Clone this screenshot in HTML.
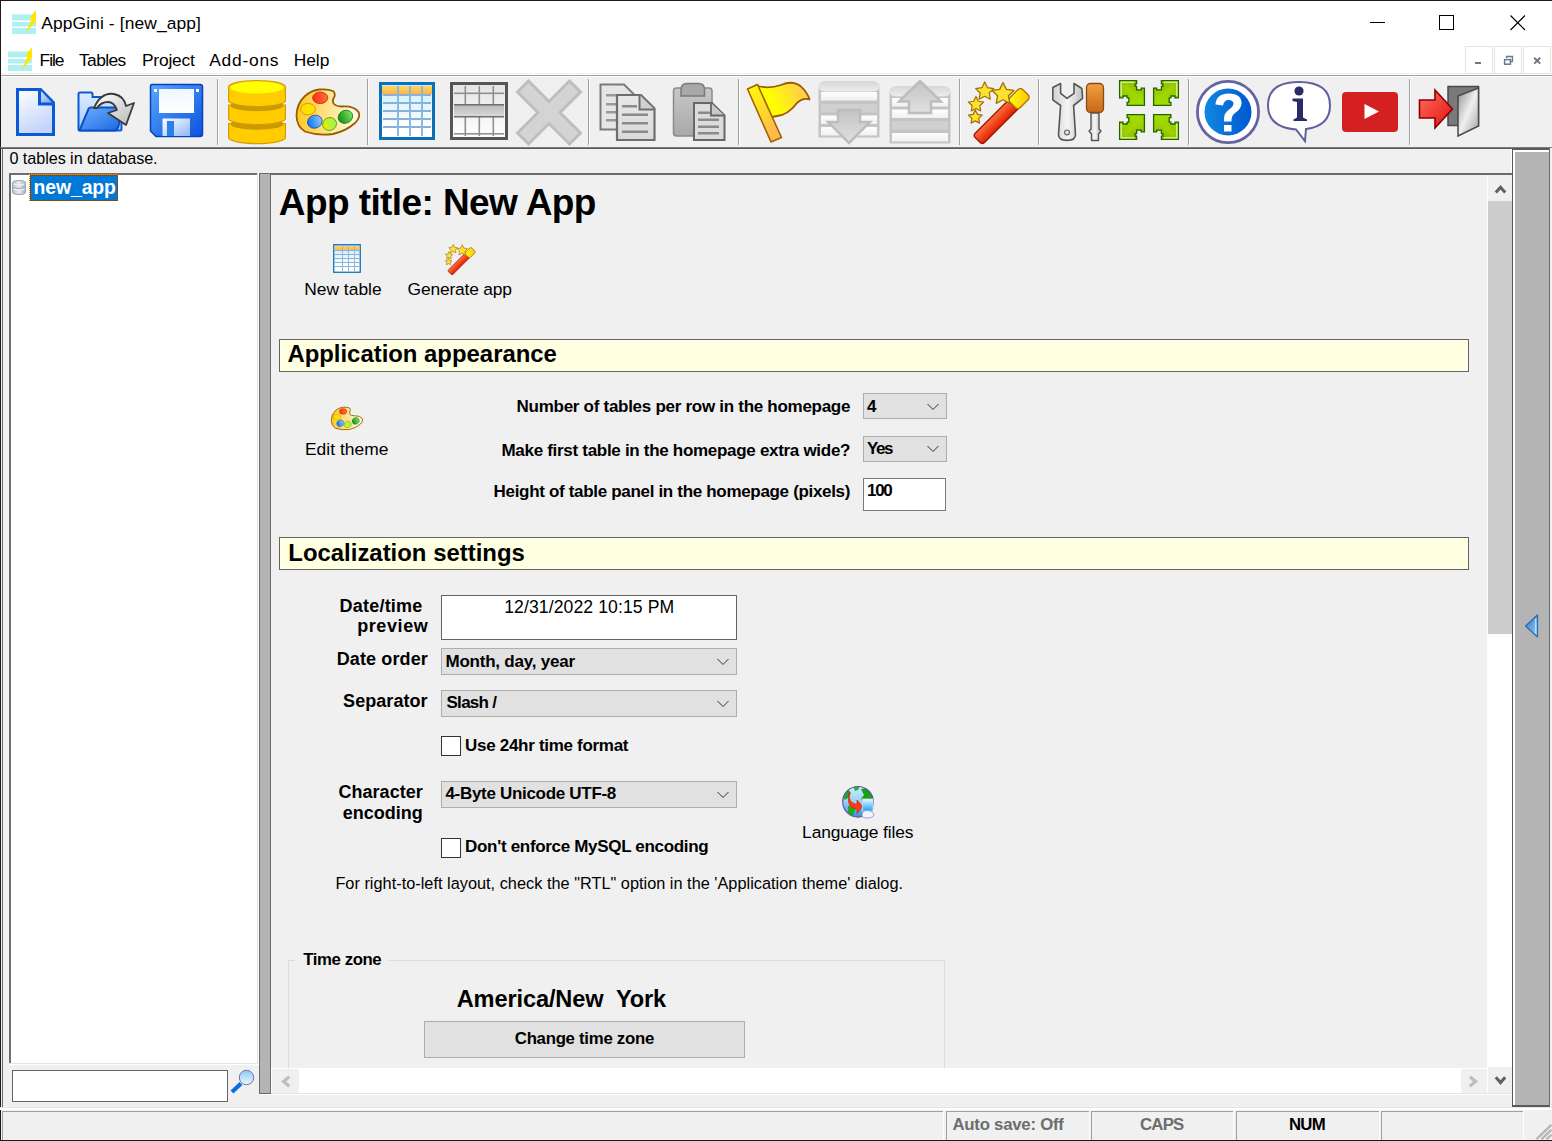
<!DOCTYPE html><html><head><meta charset="utf-8"><style>html,body{margin:0;padding:0;overflow:hidden;background:#f0f0f0}#w{position:relative;width:1552px;height:1141px;overflow:hidden;font-family:"Liberation Sans",sans-serif}#w div,#w svg{position:absolute}#w .t{white-space:pre}</style></head><body><div id="w"><div style="left:0px;top:0px;width:1552px;height:1141px;background:#f0f0f0;"></div><div style="left:0px;top:0px;width:1552px;height:75px;background:#ffffff;"></div><div style="left:0px;top:73px;width:1552px;height:1px;background:#f0f0f0;"></div><div style="left:0px;top:75px;width:1552px;height:1px;background:#a0a0a0;"></div><div style="left:0px;top:76px;width:1552px;height:1px;background:#ffffff;"></div><div style="left:0px;top:0px;width:1552px;height:1px;background:#1a1a1a;"></div><div style="left:0px;top:0px;width:1px;height:1141px;background:#1a1a1a;"></div><div style="left:0px;top:1140px;width:1552px;height:1px;background:#1a1a1a;"></div><div class="t" style="left:41.20px;top:15.27px;font-size:17.4px;line-height:17.4px;font-weight:400;color:#000;letter-spacing:0.119px;">AppGini - [new_app]</div><div style="left:1370px;top:22px;width:15px;height:1px;background:#000;"></div><div style="left:1439px;top:15px;width:13px;height:13px;background:none;border:1px solid #000;"></div><svg style="left:1510px;top:15px" width="16" height="16"><path d="M0.5 0.5 L15 15 M15 0.5 L0.5 15" stroke="#000" stroke-width="1.1"/></svg><div class="t" style="left:39.60px;top:51.87px;font-size:17.4px;line-height:17.4px;font-weight:400;color:#000;letter-spacing:-1.077px;">File</div><div class="t" style="left:79.00px;top:51.87px;font-size:17.4px;line-height:17.4px;font-weight:400;color:#000;letter-spacing:-0.601px;">Tables</div><div class="t" style="left:142.00px;top:51.87px;font-size:17.4px;line-height:17.4px;font-weight:400;color:#000;letter-spacing:-0.225px;">Project</div><div class="t" style="left:209.20px;top:51.87px;font-size:17.4px;line-height:17.4px;font-weight:400;color:#000;letter-spacing:0.764px;">Add-ons</div><div class="t" style="left:293.70px;top:51.87px;font-size:17.4px;line-height:17.4px;font-weight:400;color:#000;letter-spacing:-0.031px;">Help</div><div style="left:1465px;top:46px;width:26px;height:26px;background:#ffffff;border:1px solid #e3e3e3;"></div><div style="left:1494px;top:46px;width:26px;height:26px;background:#ffffff;border:1px solid #e3e3e3;"></div><div style="left:1523px;top:46px;width:26px;height:26px;background:#ffffff;border:1px solid #e3e3e3;"></div><svg style="left:1465px;top:46px" width="90" height="28"><rect x="10" y="16" width="6" height="2" fill="#6a7a8a"/><g transform="translate(29,0)"><rect x="10.6" y="13.6" width="5.8" height="4.6" fill="none" stroke="#6a7a8a" stroke-width="1.5"/><path d="M12.6,12 V10.6 H18.4 V15.4 H17" fill="none" stroke="#6a7a8a" stroke-width="1.5"/></g><g transform="translate(58,0)"><path d="M11.2,11.8 L17.2,17.6 M17.2,11.8 L11.2,17.6" stroke="#6a7a8a" stroke-width="2"/></g></svg><div style="left:1px;top:77px;width:1551px;height:70px;background:#f0f0f0;"></div><div style="left:217px;top:79px;width:1px;height:66px;background:#a0a0a0;"></div><div style="left:218px;top:79px;width:1px;height:66px;background:#ffffff;"></div><div style="left:367px;top:79px;width:1px;height:66px;background:#a0a0a0;"></div><div style="left:368px;top:79px;width:1px;height:66px;background:#ffffff;"></div><div style="left:588px;top:79px;width:1px;height:66px;background:#a0a0a0;"></div><div style="left:589px;top:79px;width:1px;height:66px;background:#ffffff;"></div><div style="left:738px;top:79px;width:1px;height:66px;background:#a0a0a0;"></div><div style="left:739px;top:79px;width:1px;height:66px;background:#ffffff;"></div><div style="left:959px;top:79px;width:1px;height:66px;background:#a0a0a0;"></div><div style="left:960px;top:79px;width:1px;height:66px;background:#ffffff;"></div><div style="left:1038px;top:79px;width:1px;height:66px;background:#a0a0a0;"></div><div style="left:1039px;top:79px;width:1px;height:66px;background:#ffffff;"></div><div style="left:1188px;top:79px;width:1px;height:66px;background:#a0a0a0;"></div><div style="left:1189px;top:79px;width:1px;height:66px;background:#ffffff;"></div><div style="left:1409px;top:79px;width:1px;height:66px;background:#a0a0a0;"></div><div style="left:1410px;top:79px;width:1px;height:66px;background:#ffffff;"></div><div style="left:0px;top:147px;width:1552px;height:1px;background:#7a7a7a;"></div><div style="left:1px;top:148px;width:1511px;height:1px;background:#5a5a5a;"></div><div style="left:2px;top:148px;width:1px;height:960px;background:#6a6a6a;"></div><div style="left:1511px;top:149px;width:1px;height:24px;background:#ffffff;"></div><div class="t" style="left:9.50px;top:150.09px;font-size:16.2px;line-height:16.2px;font-weight:400;color:#000;letter-spacing:-0.065px;">0 tables in database.</div><div style="left:9px;top:173px;width:249px;height:891px;background:#ffffff;"></div><div style="left:9px;top:173px;width:249px;height:2px;background:#6e6e6e;"></div><div style="left:9px;top:173px;width:2px;height:891px;background:#6e6e6e;"></div><div style="left:257px;top:173px;width:1px;height:891px;background:#e3e3e3;"></div><div style="left:258px;top:173px;width:1px;height:891px;background:#ffffff;"></div><div style="left:9px;top:1063px;width:249px;height:1px;background:#e3e3e3;"></div><div style="left:9px;top:1064px;width:250px;height:1px;background:#ffffff;"></div><div style="left:30px;top:175px;width:87px;height:25px;background:#0078d7;outline:1px dotted #ff8c00;outline-offset:0"></div><div class="t" style="left:33.50px;top:178.18px;font-size:19.4px;line-height:19.4px;font-weight:700;color:#fff;letter-spacing:-0.085px;">new_app</div><div style="left:12px;top:1070px;width:214px;height:30px;background:#ffffff;border:1px solid #646464;"></div><div style="left:259px;top:173px;width:10px;height:919px;background:#b4b4b4;border:1px solid #6a6a6a;"></div><div style="left:271px;top:173px;width:1241px;height:2px;background:#6a6a6a;"></div><div style="left:271px;top:175px;width:1217px;height:893px;background:#f0f0f0;"></div><div style="left:1487px;top:175px;width:1px;height:918px;background:#ffffff;"></div><div style="left:1488px;top:175px;width:24px;height:918px;background:#ffffff;"></div><div style="left:1488px;top:175px;width:24px;height:26px;background:#f0f0f0;"></div><div style="left:1488px;top:201px;width:24px;height:433px;background:#cdcdcd;"></div><div style="left:1488px;top:1067px;width:24px;height:26px;background:#f0f0f0;"></div><div style="left:1512px;top:149px;width:1px;height:945px;background:#6a6a6a;"></div><div style="left:271px;top:1068px;width:1217px;height:25px;background:#ffffff;"></div><div style="left:272px;top:1069px;width:27px;height:24px;background:#f0f0f0;"></div><div style="left:1461px;top:1069px;width:26px;height:24px;background:#f0f0f0;"></div><div style="left:271px;top:1093px;width:1241px;height:1px;background:#e3e3e3;"></div><div style="left:259px;top:1094px;width:1253px;height:1px;background:#ffffff;"></div><div style="left:1512px;top:148px;width:38px;height:959px;background:#5a5a5a;"></div><div style="left:1513px;top:150px;width:36px;height:955px;background:#ffffff;"></div><div style="left:1515px;top:152px;width:34px;height:953px;background:#b4b4b4;"></div><div style="left:1549px;top:148px;width:1px;height:959px;background:#6a6a6a;"></div><div style="left:0px;top:1107px;width:1552px;height:1px;background:#e6e6e6;"></div><div style="left:0px;top:1108px;width:1552px;height:2px;background:#ffffff;"></div><div style="left:2px;top:1111px;width:941px;height:1px;background:#a0a0a0;"></div><div style="left:2px;top:1111px;width:1px;height:29px;background:#a0a0a0;"></div><div style="left:943px;top:1111px;width:1px;height:29px;background:#ffffff;"></div><div style="left:946px;top:1111px;width:143px;height:1px;background:#a0a0a0;"></div><div style="left:946px;top:1111px;width:1px;height:29px;background:#a0a0a0;"></div><div style="left:1089px;top:1111px;width:1px;height:29px;background:#ffffff;"></div><div style="left:1091px;top:1111px;width:142px;height:1px;background:#a0a0a0;"></div><div style="left:1091px;top:1111px;width:1px;height:29px;background:#a0a0a0;"></div><div style="left:1233px;top:1111px;width:1px;height:29px;background:#ffffff;"></div><div style="left:1236px;top:1111px;width:143px;height:1px;background:#a0a0a0;"></div><div style="left:1236px;top:1111px;width:1px;height:29px;background:#a0a0a0;"></div><div style="left:1379px;top:1111px;width:1px;height:29px;background:#ffffff;"></div><div style="left:1381px;top:1111px;width:142px;height:1px;background:#a0a0a0;"></div><div style="left:1381px;top:1111px;width:1px;height:29px;background:#a0a0a0;"></div><div style="left:1523px;top:1111px;width:1px;height:29px;background:#ffffff;"></div><div class="t" style="left:952.50px;top:1116.78px;font-size:16.8px;line-height:16.8px;font-weight:700;color:#6d6d6d;letter-spacing:-0.257px;">Auto save: Off</div><div class="t" style="left:1140.00px;top:1116.78px;font-size:16.8px;line-height:16.8px;font-weight:700;color:#6d6d6d;letter-spacing:-0.790px;">CAPS</div><div class="t" style="left:1289.00px;top:1116.78px;font-size:16.8px;line-height:16.8px;font-weight:700;color:#000;letter-spacing:-0.777px;">NUM</div><div class="t" style="left:278.80px;top:183.68px;font-size:37px;line-height:37px;font-weight:700;color:#000;letter-spacing:-0.582px;">App title: New App</div><div class="t" style="left:304.20px;top:281.07px;font-size:17.4px;line-height:17.4px;font-weight:400;color:#000;letter-spacing:0.015px;">New table</div><div class="t" style="left:407.60px;top:281.07px;font-size:17.4px;line-height:17.4px;font-weight:400;color:#000;letter-spacing:-0.183px;">Generate app</div><div style="left:279px;top:339px;width:1188px;height:31px;background:#ffffe1;border:1px solid #646464;"></div><div class="t" style="left:287.40px;top:342.27px;font-size:23.9px;line-height:23.9px;font-weight:700;color:#000;letter-spacing:-0.001px;">Application appearance</div><div class="t" style="left:304.90px;top:441.27px;font-size:17.4px;line-height:17.4px;font-weight:400;color:#000;letter-spacing:0.048px;">Edit theme</div><div class="t" style="left:516.60px;top:397.91px;font-size:17px;line-height:17px;font-weight:700;color:#000;letter-spacing:-0.281px;">Number of tables per row in the homepage</div><div class="t" style="left:501.50px;top:441.81px;font-size:17px;line-height:17px;font-weight:700;color:#000;letter-spacing:-0.300px;">Make first table in the homepage extra wide?</div><div class="t" style="left:493.60px;top:482.61px;font-size:17px;line-height:17px;font-weight:700;color:#000;letter-spacing:-0.320px;">Height of table panel in the homepage (pixels)</div><div style="left:863px;top:393px;width:82px;height:24px;background:#e1e1e1;border:1px solid #adadad;"></div><div style="left:863px;top:436px;width:82px;height:24px;background:#e1e1e1;border:1px solid #adadad;"></div><div style="left:863px;top:478px;width:81px;height:31px;background:#ffffff;border:1px solid #7a7a7a;"></div><div class="t" style="left:867.00px;top:397.91px;font-size:17px;line-height:17px;font-weight:700;color:#000;letter-spacing:0.000px;">4</div><div class="t" style="left:867.00px;top:440.11px;font-size:17px;line-height:17px;font-weight:700;color:#000;letter-spacing:-1.454px;">Yes</div><div class="t" style="left:867.00px;top:482.01px;font-size:17px;line-height:17px;font-weight:700;color:#000;letter-spacing:-1.278px;">100</div><div style="left:279px;top:537px;width:1188px;height:31px;background:#ffffe1;border:1px solid #646464;"></div><div class="t" style="left:288.30px;top:541.07px;font-size:23.9px;line-height:23.9px;font-weight:700;color:#000;letter-spacing:0.011px;">Localization settings</div><div class="t" style="left:339.50px;top:596.56px;font-size:18px;line-height:18px;font-weight:700;color:#000;letter-spacing:0.223px;">Date/time</div><div class="t" style="left:357.20px;top:617.36px;font-size:18px;line-height:18px;font-weight:700;color:#000;letter-spacing:0.589px;">preview</div><div class="t" style="left:336.70px;top:649.56px;font-size:18px;line-height:18px;font-weight:700;color:#000;letter-spacing:0.120px;">Date order</div><div class="t" style="left:343.10px;top:691.86px;font-size:18px;line-height:18px;font-weight:700;color:#000;letter-spacing:0.059px;">Separator</div><div class="t" style="left:338.40px;top:782.56px;font-size:18px;line-height:18px;font-weight:700;color:#000;letter-spacing:0.045px;">Character</div><div class="t" style="left:342.70px;top:803.76px;font-size:18px;line-height:18px;font-weight:700;color:#000;letter-spacing:0.015px;">encoding</div><div style="left:441px;top:595px;width:294px;height:43px;background:#ffffff;border:1px solid #646464;"></div><div class="t" style="left:504.20px;top:599.00px;font-size:17.6px;line-height:17.6px;font-weight:400;color:#000;letter-spacing:0.100px;">12/31/2022 10:15 PM</div><div style="left:441px;top:648px;width:294px;height:25px;background:#e1e1e1;border:1px solid #adadad;"></div><div class="t" style="left:445.50px;top:652.61px;font-size:17px;line-height:17px;font-weight:700;color:#000;letter-spacing:-0.225px;">Month, day, year</div><div style="left:441px;top:690px;width:294px;height:25px;background:#e1e1e1;border:1px solid #adadad;"></div><div class="t" style="left:446.50px;top:694.31px;font-size:17px;line-height:17px;font-weight:700;color:#000;letter-spacing:-0.718px;">Slash /</div><div style="left:441px;top:736px;width:18px;height:18px;background:#ffffff;border:1px solid #333333;"></div><div class="t" style="left:465.10px;top:736.51px;font-size:17px;line-height:17px;font-weight:700;color:#000;letter-spacing:-0.301px;">Use 24hr time format</div><div style="left:441px;top:781px;width:294px;height:25px;background:#e1e1e1;border:1px solid #adadad;"></div><div class="t" style="left:445.40px;top:785.21px;font-size:17px;line-height:17px;font-weight:700;color:#000;letter-spacing:-0.302px;">4-Byte Unicode UTF-8</div><div style="left:441px;top:838px;width:18px;height:18px;background:#ffffff;border:1px solid #333333;"></div><div class="t" style="left:465.10px;top:838.41px;font-size:17px;line-height:17px;font-weight:700;color:#000;letter-spacing:-0.316px;">Don&#x27;t enforce MySQL encoding</div><div class="t" style="left:802.10px;top:824.27px;font-size:17.4px;line-height:17.4px;font-weight:400;color:#000;letter-spacing:-0.137px;">Language files</div><div class="t" style="left:335.40px;top:875.10px;font-size:16.3px;line-height:16.3px;font-weight:400;color:#000;letter-spacing:0.021px;">For right-to-left layout, check the &quot;RTL&quot; option in the &#x27;Application theme&#x27; dialog.</div><svg style="left:927px;top:402.8px" width="12" height="8"><path d="M0.5 1 L6 6.5 L11.5 1" fill="none" stroke="#333" stroke-width="1"/></svg><svg style="left:927px;top:444.8px" width="12" height="8"><path d="M0.5 1 L6 6.5 L11.5 1" fill="none" stroke="#333" stroke-width="1"/></svg><svg style="left:717px;top:657.8px" width="12" height="8"><path d="M0.5 1 L6 6.5 L11.5 1" fill="none" stroke="#333" stroke-width="1"/></svg><svg style="left:717px;top:699.8px" width="12" height="8"><path d="M0.5 1 L6 6.5 L11.5 1" fill="none" stroke="#333" stroke-width="1"/></svg><svg style="left:717px;top:790.8px" width="12" height="8"><path d="M0.5 1 L6 6.5 L11.5 1" fill="none" stroke="#333" stroke-width="1"/></svg><div style="left:288px;top:960px;width:7px;height:1px;background:#dcdcdc;"></div><div style="left:389px;top:960px;width:556px;height:1px;background:#dcdcdc;"></div><div style="left:288px;top:960px;width:1px;height:108px;background:#dcdcdc;"></div><div style="left:944px;top:960px;width:1px;height:108px;background:#dcdcdc;"></div><div class="t" style="left:303.20px;top:951.98px;font-size:16.8px;line-height:16.8px;font-weight:700;color:#000;letter-spacing:-0.406px;">Time zone</div><div class="t" style="left:456.70px;top:987.82px;font-size:23.6px;line-height:23.6px;font-weight:700;color:#000;letter-spacing:-0.129px;">America/New  York</div><div style="left:424px;top:1021px;width:319px;height:35px;background:#e1e1e1;border:1px solid #adadad;"></div><div class="t" style="left:514.80px;top:1031.18px;font-size:16.8px;line-height:16.8px;font-weight:700;color:#000;letter-spacing:-0.277px;">Change time zone</div><svg style="left:14px;top:86px" width="44" height="52" viewBox="14 86 44 52"><defs><linearGradient id="ndg" x1="0" y1="0" x2="0.4" y2="1"><stop offset="0" stop-color="#ffffff"/><stop offset="1" stop-color="#c4d4fa"/></linearGradient><linearGradient id="ndf" x1="0" y1="0" x2="1" y2="1"><stop offset="0" stop-color="#e8f0ff"/><stop offset="1" stop-color="#6a94ee"/></linearGradient></defs><path d="M17.5,89.5 H40.5 L53.5,102.5 V134.5 H17.5 Z" fill="url(#ndg)" stroke="#0a5ad8" stroke-width="3" stroke-linejoin="miter"/><path d="M39.5,89.5 V104 H53.5" fill="url(#ndf)" stroke="#0a5ad8" stroke-width="3"/></svg><svg style="left:74px;top:88px" width="66" height="48" viewBox="74 88 66 48"><defs><linearGradient id="ofb" x1="0" y1="0" x2="0" y2="1"><stop offset="0" stop-color="#e0ecff"/><stop offset="1" stop-color="#a8c8f8"/></linearGradient><linearGradient id="off" x1="0" y1="0" x2="1" y2="1"><stop offset="0" stop-color="#70b0ff"/><stop offset="1" stop-color="#1a66e0"/></linearGradient><linearGradient id="ofa" x1="0" y1="0" x2="1" y2="1"><stop offset="0" stop-color="#ffffff"/><stop offset="1" stop-color="#b8b8b8"/></linearGradient></defs><path d="M78.5,94 Q78.5,92.5 80,92.5 H91 Q92.5,92.5 92.5,94 V97 H120 Q121.5,97 121.5,98.5 V129 Q121.5,130.5 120,130.5 H80 Q78.5,130.5 78.5,129 Z" fill="url(#ofb)" stroke="#0a5ad8" stroke-width="2"/><path d="M79.5,130.5 L88.5,109 Q89,107.5 91,107.5 H122 L119,124 Q118,130.5 114,130.5 Z" fill="url(#off)" stroke="#0a50c8" stroke-width="2" stroke-linejoin="round"/><path d="M94,108 Q101,92 114,94 Q124,96 126,106 L134,103 L126,125 L108,113 L117,110 Q114,102 108,102 Q101,102 97,108 Z" fill="url(#ofa)" stroke="#3a3a3a" stroke-width="1.8" stroke-linejoin="round"/></svg><svg style="left:148px;top:82px" width="58" height="58" viewBox="148 82 58 58"><defs><linearGradient id="svg1" x1="0" y1="0" x2="1" y2="1"><stop offset="0" stop-color="#5aa8ff"/><stop offset="1" stop-color="#0a52e0"/></linearGradient><linearGradient id="svl" x1="0" y1="0" x2="0" y2="1"><stop offset="0" stop-color="#f0f6ff"/><stop offset="1" stop-color="#ffffff"/></linearGradient><linearGradient id="svs" x1="0" y1="0" x2="1" y2="1"><stop offset="0" stop-color="#ffffff"/><stop offset="1" stop-color="#90b8f8"/></linearGradient></defs><path d="M152,84.5 H200 Q202.5,84.5 202.5,87 V134 Q202.5,136.5 200,136.5 H156 L150.5,131 V86 Q150.5,84.5 152,84.5 Z" fill="url(#svg1)" stroke="#0840b8" stroke-width="1.5"/><rect x="159" y="89" width="35" height="24" fill="url(#svl)"/><rect x="154" y="89" width="3" height="3" fill="#fff"/><rect x="196" y="89" width="3" height="3" fill="#fff"/><rect x="162.5" y="118.5" width="27.5" height="17.5" fill="url(#svs)"/><rect x="167" y="121" width="7" height="15" fill="#2a7ef0"/></svg><svg style="left:226px;top:78px" width="62" height="68" viewBox="226 78 62 68"><defs></defs><path d="M228.6,123.5 V137.6 A28.4,6 0 0 0 285.4,137.6 V123.5 Z" fill="#ffcc00" stroke="#d49c00" stroke-width="1.2"/><ellipse cx="257" cy="124" rx="26.5" ry="5.8" fill="#cc9a00"/><path d="M228.6,105 V118.6 A28.4,6 0 0 0 285.4,118.6 V105 Z" fill="#ffcc00" stroke="#d49c00" stroke-width="1.2"/><ellipse cx="257" cy="105.5" rx="26.5" ry="5.8" fill="#cc9a00"/><path d="M228.6,87 V100.6 A28.4,6 0 0 0 285.4,100.6 V87 A28.4,6.5 0 0 0 228.6,87 Z" fill="#ffcc00" stroke="#d49c00" stroke-width="1.2"/><ellipse cx="257" cy="87.5" rx="26.5" ry="6" fill="#ffff00"/></svg><svg style="left:294px;top:86px" width="68" height="52" viewBox="294 86 68 52"><defs><linearGradient id="plg" x1="0" y1="0" x2="1" y2="0"><stop offset="0" stop-color="#ffc820"/><stop offset="0.6" stop-color="#ffe8a0"/><stop offset="1" stop-color="#fffcf0"/></linearGradient><linearGradient id="pr" x1="0" y1="0" x2="1" y2="0"><stop offset="0" stop-color="#ff3010"/><stop offset="1" stop-color="#ff7040"/></linearGradient><linearGradient id="pb" x1="0" y1="0" x2="1" y2="0"><stop offset="0" stop-color="#1070f0"/><stop offset="1" stop-color="#90c8ff"/></linearGradient><linearGradient id="plgr" x1="0" y1="0" x2="1" y2="0"><stop offset="0" stop-color="#e0f000"/><stop offset="1" stop-color="#a0f060"/></linearGradient><linearGradient id="pg" x1="0" y1="0" x2="1" y2="0"><stop offset="0" stop-color="#109010"/><stop offset="1" stop-color="#80e060"/></linearGradient></defs><path d="M319.5,89.5 Q328,88.8 333,91 Q335.5,93 334.5,96.5 Q331.5,101 334,104 Q336,106.5 343,106.5 Q354,106 358.5,112 Q361,117 355,123 Q346,131 333,134 Q318,136 305,131.5 Q297,127 296.5,116 Q296.5,104 305,96 Q311,90.5 319.5,89.5 Z" fill="url(#plg)" stroke="#9a5c00" stroke-width="1.8"/><ellipse cx="320.2" cy="97.8" rx="7.6" ry="5.8" fill="url(#pr)" stroke="#b82800" stroke-width="0.8"/><ellipse cx="308" cy="109.2" rx="7.4" ry="5.8" fill="#ffe000" stroke="#c09000" stroke-width="0.8"/><ellipse cx="314.8" cy="121.7" rx="7.4" ry="6.4" transform="rotate(-20 314.8 121.7)" fill="url(#pb)" stroke="#1050b0" stroke-width="0.8"/><ellipse cx="329.6" cy="124" rx="7" ry="6.4" transform="rotate(-20 329.6 124)" fill="url(#plgr)" stroke="#50a000" stroke-width="0.8"/><ellipse cx="345.4" cy="116.8" rx="7.4" ry="6.4" transform="rotate(-25 345.4 116.8)" fill="url(#pg)" stroke="#108010" stroke-width="0.8"/></svg><svg style="left:377px;top:80px" width="60" height="62" viewBox="377 80 60 62"><defs><linearGradient id="tbg" x1="0" y1="0" x2="0" y2="1"><stop offset="0" stop-color="#c8ecfc"/><stop offset="0.8" stop-color="#ffffff"/></linearGradient><linearGradient id="tbh" x1="0" y1="0" x2="0" y2="1"><stop offset="0" stop-color="#ffd070"/><stop offset="1" stop-color="#ffb840"/></linearGradient></defs><rect x="380.5" y="83.5" width="53" height="55" fill="url(#tbg)" stroke="#0a70b8" stroke-width="3"/><rect x="382" y="86" width="50" height="8" fill="url(#tbh)"/><rect x="383" y="94" width="48" height="2" fill="#8ab0d8"/><rect x="383" y="102" width="48" height="2" fill="#8ab0d8"/><rect x="383" y="110" width="48" height="2" fill="#8ab0d8"/><rect x="383" y="118" width="48" height="2" fill="#8ab0d8"/><rect x="383" y="126" width="48" height="2" fill="#8ab0d8"/><rect x="397" y="86" width="2" height="50" fill="#8ab8e0"/><rect x="409" y="86" width="2" height="50" fill="#8ab8e0"/><rect x="421" y="86" width="2" height="50" fill="#8ab8e0"/></svg><svg style="left:448px;top:80px" width="62" height="62" viewBox="448 80 62 62"><defs><linearGradient id="gtg" x1="0" y1="0" x2="0" y2="1"><stop offset="0" stop-color="#e4e4e4"/><stop offset="1" stop-color="#ffffff"/></linearGradient><linearGradient id="gtb" x1="0" y1="0" x2="0" y2="1"><stop offset="0" stop-color="#b8b8b8"/><stop offset="1" stop-color="#d8d8d8"/></linearGradient></defs><rect x="451.5" y="83.5" width="55" height="55" fill="url(#gtg)" stroke="#555" stroke-width="3"/><rect x="464.5" y="86" width="1.6" height="50" fill="#909090"/><rect x="478.5" y="86" width="1.6" height="50" fill="#909090"/><rect x="492.5" y="86" width="1.6" height="50" fill="#909090"/><rect x="454" y="92.5" width="50" height="1.6" fill="#909090"/><rect x="454" y="133" width="50" height="1.6" fill="#909090"/><rect x="454" y="104" width="50" height="12" fill="url(#gtb)"/><rect x="454" y="104" width="50" height="1.5" fill="#707070"/><rect x="454" y="116" width="50" height="1.5" fill="#707070"/></svg><svg style="left:515px;top:79px" width="68" height="68" viewBox="515 79 68 68"><defs></defs><path d="M517.5,99.5 L528.5,88.5 L549,109 L569.5,88.5 L580.5,99.5 L560,120 L580.5,140.5 L569.5,151.5 L549,131 L528.5,151.5 L517.5,140.5 L538,120 Z" transform="translate(0,-7.5) " fill="#d4d4d4" stroke="#bebebe" stroke-width="3" stroke-linejoin="miter"/></svg><svg style="left:597px;top:81px" width="62" height="62" viewBox="597 81 62 62"><defs><linearGradient id="cpg" x1="0" y1="0" x2="0" y2="1"><stop offset="0" stop-color="#e8e8e8"/><stop offset="1" stop-color="#dadada"/></linearGradient></defs><path d="M600.5,84.5 H624 L634,94.5 V129.5 H600.5 Z" fill="#e6e6e6" stroke="#7a7a7a" stroke-width="2"/><rect x="606" y="94" width="14" height="2.5" fill="#999"/><rect x="606" y="103" width="14" height="2.5" fill="#999"/><rect x="606" y="111" width="14" height="2.5" fill="#999"/><rect x="606" y="119" width="14" height="2.5" fill="#999"/><path d="M617,95 H641 L654.5,108.5 V140 H617 Z" fill="url(#cpg)" stroke="#6e6e6e" stroke-width="2.2"/><path d="M639.5,95 V109.5 H654.5" fill="#d0d0d0" stroke="#6e6e6e" stroke-width="2"/><rect x="622" y="105" width="15" height="2.5" fill="#8a8a8a"/><rect x="622" y="113.5" width="26" height="2.5" fill="#8a8a8a"/><rect x="622" y="122" width="26" height="2.5" fill="#8a8a8a"/><rect x="622" y="130.5" width="26" height="2.5" fill="#8a8a8a"/></svg><svg style="left:671px;top:81px" width="58" height="62" viewBox="671 81 58 62"><defs><linearGradient id="psg" x1="0" y1="0" x2="0" y2="1"><stop offset="0" stop-color="#c8c8c8"/><stop offset="1" stop-color="#a8a8a8"/></linearGradient></defs><rect x="673.5" y="88" width="38.5" height="48" rx="3" fill="url(#psg)" stroke="#8a8a8a" stroke-width="1.5"/><path d="M681,96 V90 Q681,83.5 687,83.5 H699 Q704.5,83.5 704.5,90 V96 Z" fill="#a8a8a8" stroke="#7a7a7a" stroke-width="1.5"/><path d="M694,103 H712 L724.5,115.5 V140 H694 Z" fill="#dcdcdc" stroke="#666" stroke-width="2"/><path d="M711,103 V115.5 H724.5" fill="#c8c8c8" stroke="#666" stroke-width="1.8"/><rect x="698" y="111.5" width="12" height="2.5" fill="#8a8a8a"/><rect x="698" y="118.5" width="21" height="2.5" fill="#8a8a8a"/><rect x="698" y="125.5" width="21" height="2.5" fill="#8a8a8a"/><rect x="698" y="132" width="21" height="2.5" fill="#8a8a8a"/></svg><svg style="left:744px;top:78px" width="68" height="68" viewBox="744 78 68 68"><defs><linearGradient id="flg" x1="0" y1="0.3" x2="1" y2="0"><stop offset="0.2" stop-color="#ffff00"/><stop offset="1" stop-color="#ffc060"/></linearGradient><linearGradient id="flp" x1="0" y1="0" x2="0.5" y2="1"><stop offset="0" stop-color="#ffff00"/><stop offset="1" stop-color="#ffb850"/></linearGradient></defs><path d="M756,85.5 Q768,89.5 781,85 Q795,79 803.5,89 Q808.5,95 809.5,99.5 Q803,97.5 797,103 Q788,115 777,116 Q771,117 768,118 Z" fill="url(#flg)" stroke="#9a5a00" stroke-width="1.8" stroke-linejoin="round"/><path d="M747.5,89 L757.5,84.5 L781.5,137.5 L771,142 Z" fill="url(#flp)" stroke="#a06400" stroke-width="1.6" stroke-linejoin="round"/></svg><svg style="left:815px;top:78px" width="68" height="68" viewBox="815 78 68 68"><defs><linearGradient id="mdh" x1="0" y1="0" x2="0" y2="1"><stop offset="0" stop-color="#d8d8d8"/><stop offset="1" stop-color="#ececec"/></linearGradient><linearGradient id="mdw" x1="0" y1="0" x2="0" y2="1"><stop offset="0" stop-color="#ffffff"/><stop offset="1" stop-color="#f0f0f0"/></linearGradient><linearGradient id="mda" x1="0" y1="0" x2="0" y2="1"><stop offset="0" stop-color="#c4c4c4"/><stop offset="1" stop-color="#e0e0e0"/></linearGradient></defs><path d="M818.5,88 Q818.5,81.5 825,81.5 H873 Q879.5,81.5 879.5,88 V137.5 H818.5 Z" fill="#c4c4c4"/><rect x="818.5" y="81.5" width="61" height="10" rx="6" fill="url(#mdh)"/><rect x="821" y="92" width="56" height="8.5" fill="url(#mdw)"/><rect x="821" y="104" width="56" height="8.5" fill="#d0d0d0"/><rect x="821" y="115.5" width="56" height="8.5" fill="url(#mdw)"/><rect x="821" y="127" width="56" height="8.5" fill="url(#mdw)"/><path d="M838,110 H860 V122 H870 L849,143 L828,122 H838 Z" fill="url(#mda)" stroke="#bdbdbd" stroke-width="2.5" stroke-linejoin="miter"/></svg><svg style="left:886px;top:78px" width="68" height="68" viewBox="886 78 68 68"><defs></defs><path d="M889.5,93 Q889.5,86.5 896,86.5 H944 Q950.5,86.5 950.5,93 V143.5 H889.5 Z" fill="#c4c4c4"/><rect x="889.5" y="86.5" width="61" height="10" rx="6" fill="url(#mdh)"/><rect x="892" y="98" width="56" height="8.5" fill="url(#mdw)"/><rect x="892" y="109.5" width="56" height="8.5" fill="url(#mdw)"/><rect x="892" y="121" width="56" height="8.5" fill="#d0d0d0"/><rect x="892" y="133" width="56" height="8.5" fill="url(#mdw)"/><path d="M909,113 H931 V101.5 H941 L920,81 L899,101.5 H909 Z" fill="url(#mda)" stroke="#bdbdbd" stroke-width="2.5" stroke-linejoin="miter"/></svg><svg style="left:964px;top:78px" width="72" height="70" viewBox="964 78 72 70"><defs><linearGradient id="wdr" x1="0" y1="0" x2="0" y2="1"><stop offset="0" stop-color="#ff7040"/><stop offset="1" stop-color="#e02000"/></linearGradient><linearGradient id="wdy" x1="0" y1="0" x2="1" y2="1"><stop offset="0" stop-color="#ffff20"/><stop offset="1" stop-color="#ffc000"/></linearGradient></defs><g transform="rotate(-45 1000 117)"><rect x="968" y="111" width="67" height="13" rx="3" fill="url(#wdr)" stroke="#a01800" stroke-width="1.4"/><rect x="1017.5" y="110.3" width="18" height="14.4" rx="3.5" fill="url(#wdy)" stroke="#b07800" stroke-width="1.4"/></g><path d="M1003.00,82.50 L1006.38,89.35 L1013.94,90.45 L1008.47,95.78 L1009.76,103.30 L1003.00,99.75 L996.24,103.30 L997.53,95.78 L992.06,90.45 L999.62,89.35 Z" fill="#ffe030" stroke="#a07000" stroke-width="1.3" stroke-linejoin="round"/><path d="M984.70,82.00 L987.49,87.66 L993.74,88.56 L989.22,92.97 L990.28,99.19 L984.70,96.25 L979.12,99.19 L980.18,92.97 L975.66,88.56 L981.91,87.66 Z" fill="#ffe030" stroke="#a07000" stroke-width="1.2" stroke-linejoin="round"/><path d="M976.00,96.50 L978.35,101.26 L983.61,102.03 L979.80,105.74 L980.70,110.97 L976.00,108.50 L971.30,110.97 L972.20,105.74 L968.39,102.03 L973.65,101.26 Z" fill="#ffe030" stroke="#a07000" stroke-width="1.2" stroke-linejoin="round"/><path d="M975.30,110.10 L977.42,114.39 L982.15,115.08 L978.72,118.41 L979.53,123.12 L975.30,120.90 L971.07,123.12 L971.88,118.41 L968.45,115.08 L973.18,114.39 Z" fill="#ffe030" stroke="#a07000" stroke-width="1.2" stroke-linejoin="round"/></svg><svg style="left:1048px;top:80px" width="60" height="64" viewBox="1048 80 60 64"><defs><linearGradient id="wrg" x1="0" y1="0" x2="1" y2="0"><stop offset="0" stop-color="#d0d0d0"/><stop offset="0.5" stop-color="#f4f4f4"/><stop offset="1" stop-color="#c0c0c0"/></linearGradient><linearGradient id="sdh" x1="0" y1="0" x2="0" y2="1"><stop offset="0" stop-color="#f0a040"/><stop offset="1" stop-color="#c86818"/></linearGradient><linearGradient id="sds" x1="0" y1="0" x2="1" y2="0"><stop offset="0" stop-color="#d0d0d0"/><stop offset="0.5" stop-color="#f4f4f4"/><stop offset="1" stop-color="#b8b8b8"/></linearGradient></defs><path d="M1052.8,87.5 L1060.6,83.5 V93.4 L1067,98.4 L1074,93.4 V83.5 L1081.9,88.5 L1082.6,98.4 L1073.6,105.5 L1075.5,134.5 Q1075.5,140.4 1067,140.4 Q1058.5,140.4 1058.5,134.5 L1060.6,105.5 L1052.8,99.8 Z" fill="url(#wrg)" stroke="#555" stroke-width="1.6" stroke-linejoin="round"/><circle cx="1067" cy="132.4" r="2.4" fill="#e8e8e8" stroke="#666" stroke-width="1.2"/><rect x="1086.5" y="83.5" width="17" height="29" rx="4" fill="url(#sdh)" stroke="#8a4a10" stroke-width="1.3"/><path d="M1091,113 H1099 V129 L1101,131 L1098.5,134 V140.5 H1091.5 V134 L1089,131 L1091,129 Z" fill="url(#sds)" stroke="#555" stroke-width="1.4" stroke-linejoin="round"/></svg><svg style="left:1116px;top:78px" width="66" height="66" viewBox="1116 78 66 66"><defs><linearGradient id="arg" x1="0" y1="0" x2="0" y2="1"><stop offset="0" stop-color="#90c000"/><stop offset="1" stop-color="#a0e000"/></linearGradient></defs><g transform="translate(1119,80) scale(1,1)"><path d="M0.6,0.6 H17.6 V3.8 H16.1 V6.4 H17.6 V9.8 H22.3 V8.1 H25.4 V25.4 H8.1 V22.4 H9.8 V17.8 H8.1 V16 H4 V17.8 H0.6 Z" fill="url(#arg)" stroke="#246400" stroke-width="1.3"/><path d="M2.2,16 V2.2 H15.5" fill="none" stroke="#d8f090" stroke-width="1.6" opacity="0.9"/><path d="M5,5 L22,22" stroke="#a8d800" stroke-width="5" opacity="0.5"/></g><g transform="translate(1179,80) scale(-1,1)"><path d="M0.6,0.6 H17.6 V3.8 H16.1 V6.4 H17.6 V9.8 H22.3 V8.1 H25.4 V25.4 H8.1 V22.4 H9.8 V17.8 H8.1 V16 H4 V17.8 H0.6 Z" fill="url(#arg)" stroke="#246400" stroke-width="1.3"/><path d="M2.2,16 V2.2 H15.5" fill="none" stroke="#d8f090" stroke-width="1.6" opacity="0.9"/><path d="M5,5 L22,22" stroke="#a8d800" stroke-width="5" opacity="0.5"/></g><g transform="translate(1119,140) scale(1,-1)"><path d="M0.6,0.6 H17.6 V3.8 H16.1 V6.4 H17.6 V9.8 H22.3 V8.1 H25.4 V25.4 H8.1 V22.4 H9.8 V17.8 H8.1 V16 H4 V17.8 H0.6 Z" fill="url(#arg)" stroke="#246400" stroke-width="1.3"/><path d="M2.2,16 V2.2 H15.5" fill="none" stroke="#d8f090" stroke-width="1.6" opacity="0.9"/><path d="M5,5 L22,22" stroke="#a8d800" stroke-width="5" opacity="0.5"/></g><g transform="translate(1179,140) scale(-1,-1)"><path d="M0.6,0.6 H17.6 V3.8 H16.1 V6.4 H17.6 V9.8 H22.3 V8.1 H25.4 V25.4 H8.1 V22.4 H9.8 V17.8 H8.1 V16 H4 V17.8 H0.6 Z" fill="url(#arg)" stroke="#246400" stroke-width="1.3"/><path d="M2.2,16 V2.2 H15.5" fill="none" stroke="#d8f090" stroke-width="1.6" opacity="0.9"/><path d="M5,5 L22,22" stroke="#a8d800" stroke-width="5" opacity="0.5"/></g></svg><svg style="left:1193px;top:77px" width="70" height="70" viewBox="1193 77 70 70"><defs><linearGradient id="hpg" x1="0" y1="0" x2="1" y2="0"><stop offset="0" stop-color="#1088e0"/><stop offset="1" stop-color="#0058d0"/></linearGradient></defs><circle cx="1228" cy="112" r="30.6" fill="#fff" stroke="#6464a0" stroke-width="2.8"/><circle cx="1228" cy="112" r="23.5" fill="url(#hpg)"/><path d="M1215.5,104.5 Q1216,94 1228.5,93.5 Q1242,93.5 1241.5,104 Q1241,109 1235,113 Q1231.5,115.5 1231.5,120 V121.5 H1224 V119 Q1224,113 1229,109.5 Q1233.5,106.5 1233.5,103.5 Q1233,100 1228.5,100 Q1224,100 1223,105.5 Z" fill="#fff"/><rect x="1224" y="125" width="7.5" height="6.5" fill="#fff"/></svg><svg style="left:1264px;top:78px" width="70" height="68" viewBox="1264 78 70 68"><defs></defs><path d="M1299,82 Q1330,82 1330,105.5 Q1330,126 1306,129 L1305,141 L1296,129.5 Q1268,127 1268,105.5 Q1268,82 1299,82 Z" fill="#fff" stroke="#6060a0" stroke-width="2"/><circle cx="1299" cy="91" r="4.6" fill="#2a2a66"/><path d="M1292.5,98.5 H1303 V117.5 L1307,119.5 V121 H1293.5 V119.5 L1297,117.5 V102 L1292.5,101 Z" fill="#2a2a66"/></svg><svg style="left:1340px;top:90px" width="60" height="44" viewBox="1340 90 60 44"><defs></defs><rect x="1342" y="92" width="56" height="40" rx="4" fill="#d42020"/><path d="M1364.5,104 L1379,111.5 L1364.5,119 Z" fill="#ffffff"/></svg><svg style="left:1416px;top:84px" width="66" height="56" viewBox="1416 84 66 56"><defs><linearGradient id="exd" x1="0" y1="0" x2="1" y2="1"><stop offset="0" stop-color="#909090"/><stop offset="0.5" stop-color="#f0f0f0"/><stop offset="1" stop-color="#a0a0a0"/></linearGradient><linearGradient id="exa" x1="0" y1="0" x2="1" y2="1"><stop offset="0" stop-color="#ff7060"/><stop offset="1" stop-color="#e01010"/></linearGradient></defs><rect x="1448" y="86.5" width="30.5" height="39" fill="#7a7a7a" stroke="#4a4a4a" stroke-width="1.5"/><path d="M1458,96 L1478.5,88 V126 L1458,136 Z" fill="url(#exd)" stroke="#4a4a4a" stroke-width="1.5"/><path d="M1419.5,100 H1435 V90 L1452.5,109 L1435,128 V118 H1419.5 Z" fill="url(#exa)" stroke="#8a0000" stroke-width="1.6" stroke-linejoin="miter"/></svg><svg style="left:331px;top:242px" width="32" height="33"><defs></defs><g transform="translate(2,2) scale(0.5000) translate(-379,-82)"><rect x="380.5" y="83.5" width="53" height="55" fill="url(#tbg)" stroke="#0a70b8" stroke-width="2.6"/><rect x="382" y="86" width="50" height="8" fill="url(#tbh)"/><rect x="383" y="94" width="48" height="2" fill="#8ab0d8"/><rect x="383" y="102" width="48" height="2" fill="#8ab0d8"/><rect x="383" y="110" width="48" height="2" fill="#8ab0d8"/><rect x="383" y="118" width="48" height="2" fill="#8ab0d8"/><rect x="383" y="126" width="48" height="2" fill="#8ab0d8"/><rect x="397" y="86" width="2" height="50" fill="#8ab8e0"/><rect x="409" y="86" width="2" height="50" fill="#8ab8e0"/><rect x="421" y="86" width="2" height="50" fill="#8ab8e0"/></g></svg><svg style="left:443px;top:242px" width="35" height="35"><defs></defs><g transform="translate(2,2) scale(0.4921) translate(-968,-81)"><g transform="rotate(-45 1000 117)"><rect x="968" y="111" width="67" height="13" rx="3" fill="url(#wdr)" stroke="#a01800" stroke-width="1.4"/><rect x="1017.5" y="110.3" width="18" height="14.4" rx="3.5" fill="url(#wdy)" stroke="#b07800" stroke-width="1.4"/></g><path d="M1003.00,82.50 L1006.38,89.35 L1013.94,90.45 L1008.47,95.78 L1009.76,103.30 L1003.00,99.75 L996.24,103.30 L997.53,95.78 L992.06,90.45 L999.62,89.35 Z" fill="#ffe030" stroke="#a07000" stroke-width="1.3" stroke-linejoin="round"/><path d="M984.70,82.00 L987.49,87.66 L993.74,88.56 L989.22,92.97 L990.28,99.19 L984.70,96.25 L979.12,99.19 L980.18,92.97 L975.66,88.56 L981.91,87.66 Z" fill="#ffe030" stroke="#a07000" stroke-width="1.2" stroke-linejoin="round"/><path d="M976.00,96.50 L978.35,101.26 L983.61,102.03 L979.80,105.74 L980.70,110.97 L976.00,108.50 L971.30,110.97 L972.20,105.74 L968.39,102.03 L973.65,101.26 Z" fill="#ffe030" stroke="#a07000" stroke-width="1.2" stroke-linejoin="round"/><path d="M975.30,110.10 L977.42,114.39 L982.15,115.08 L978.72,118.41 L979.53,123.12 L975.30,120.90 L971.07,123.12 L971.88,118.41 L968.45,115.08 L973.18,114.39 Z" fill="#ffe030" stroke="#a07000" stroke-width="1.2" stroke-linejoin="round"/></g></svg><svg style="left:329px;top:405px" width="36" height="27"><defs></defs><g transform="translate(2,2) scale(0.5000) translate(-296,-89)"><path d="M319.5,89.5 Q328,88.8 333,91 Q335.5,93 334.5,96.5 Q331.5,101 334,104 Q336,106.5 343,106.5 Q354,106 358.5,112 Q361,117 355,123 Q346,131 333,134 Q318,136 305,131.5 Q297,127 296.5,116 Q296.5,104 305,96 Q311,90.5 319.5,89.5 Z" fill="url(#plg)" stroke="#9a5c00" stroke-width="1.8"/><ellipse cx="320.2" cy="97.8" rx="7.6" ry="5.8" fill="url(#pr)" stroke="#b82800" stroke-width="0.8"/><ellipse cx="308" cy="109.2" rx="7.4" ry="5.8" fill="#ffe000" stroke="#c09000" stroke-width="0.8"/><ellipse cx="314.8" cy="121.7" rx="7.4" ry="6.4" transform="rotate(-20 314.8 121.7)" fill="url(#pb)" stroke="#1050b0" stroke-width="0.8"/><ellipse cx="329.6" cy="124" rx="7" ry="6.4" transform="rotate(-20 329.6 124)" fill="url(#plgr)" stroke="#50a000" stroke-width="0.8"/><ellipse cx="345.4" cy="116.8" rx="7.4" ry="6.4" transform="rotate(-25 345.4 116.8)" fill="url(#pg)" stroke="#108010" stroke-width="0.8"/></g></svg><svg style="left:12px;top:10px" width="24" height="24"><rect x="0" y="4.4" width="24" height="6" fill="#aef0f4"/><rect x="0" y="12" width="24" height="4.5" fill="#aef0f4"/><rect x="0" y="18" width="24" height="6" fill="#aef0f4"/><path d="M24,0 V11 L19,17 L13,23 L18,14 L19.5,9 L17,8.5 Z" fill="#ffe600"/></svg><svg style="left:8px;top:47px" width="24" height="24"><rect x="0" y="4.4" width="24" height="6" fill="#aef0f4"/><rect x="0" y="12" width="24" height="4.5" fill="#aef0f4"/><rect x="0" y="18" width="24" height="6" fill="#aef0f4"/><path d="M24,0 V11 L19,17 L13,23 L18,14 L19.5,9 L17,8.5 Z" fill="#ffe600"/></svg><svg style="left:11px;top:179px" width="17" height="17" viewBox="11 179 17 17"><defs><linearGradient id="tdb" x1="0" y1="0" x2="1" y2="0"><stop offset="0" stop-color="#b8c2ca"/><stop offset="0.5" stop-color="#e4eaf0"/><stop offset="1" stop-color="#aab4bc"/></linearGradient></defs><path d="M12.5,183 Q12.5,180.5 19,180.5 Q25.5,180.5 25.5,183 V192 Q25.5,194.5 19,194.5 Q12.5,194.5 12.5,192 Z" fill="url(#tdb)" stroke="#98a4ac" stroke-width="1"/><path d="M13.5,184 Q19,186.5 24.5,184" fill="none" stroke="#f4f8fc" stroke-width="1"/><path d="M12.5,187.5 Q19,190 25.5,187.5" fill="none" stroke="#a0aab2" stroke-width="1"/><path d="M13.5,189 Q19,191.5 24.5,189" fill="none" stroke="#f4f8fc" stroke-width="1"/></svg><svg style="left:30px;top:175px" width="88" height="26"><rect x="0.5" y="0.5" width="87" height="25" fill="none" stroke="#ff9a20" stroke-width="1"/><rect x="0.5" y="0.5" width="87" height="25" fill="none" stroke="#000" stroke-width="1" stroke-dasharray="1 1"/></svg><svg style="left:840px;top:784px" width="38" height="38" viewBox="840 784 38 38"><defs><linearGradient id="gbl" x1="0" y1="0" x2="0" y2="1"><stop offset="0" stop-color="#d0ecff"/><stop offset="0.5" stop-color="#9ad0f8"/><stop offset="1" stop-color="#3a90d8"/></linearGradient><linearGradient id="gdoc" x1="0" y1="0" x2="0" y2="1"><stop offset="0" stop-color="#e8f8ff"/><stop offset="1" stop-color="#18a8ff"/></linearGradient><clipPath id="gclip"><circle cx="858" cy="801.8" r="15.3"/></clipPath></defs><circle cx="858" cy="801.8" r="15.3" fill="url(#gbl)"/><g clip-path="url(#gclip)"><path d="M853,786 L860,786 L858,790 L855,791 Z" fill="#30b030"/><path d="M861,789 L866,788 L874,796 L874,802 L866,803 L861,799 L864,795 Z" fill="#18a018"/><path d="M842,796 L848,790 L851,793 L849,797 L845,800 Z" fill="#20a820"/><path d="M848,806 L853,805 L856,808 L853,815 L851,819 L848,816 Z" fill="#20a820"/></g><circle cx="858" cy="801.8" r="15.3" fill="none" stroke="#5a5a9a" stroke-width="1.2"/><path d="M849.5,791 Q847.5,803 857,804.5 V800 L862.5,806.5 L857,813.5 V809 Q845,808 849.5,791 Z" fill="#ff3a10" stroke="#c02000" stroke-width="0.6"/><rect x="862.5" y="799" width="10.5" height="12" fill="url(#gdoc)" stroke="#d0d8e8" stroke-width="0.8"/><path d="M862,815 Q862,810.5 867,810.5 Q873,810.5 874,815 Q873,818 867,818 Q862,818 862,815 Z" fill="#f4f4fc" stroke="#8a8ac0" stroke-width="0.8"/></svg><svg style="left:228px;top:1067px" width="30" height="30" viewBox="228 1067 30 30"><defs><linearGradient id="mgg" x1="0" y1="0" x2="0" y2="1"><stop offset="0" stop-color="#90c8f8"/><stop offset="1" stop-color="#e8f8ff"/></linearGradient></defs><path d="M232,1092 L241,1083.5" stroke="#0a70e0" stroke-width="4.2"/><circle cx="246.5" cy="1077.5" r="7.2" fill="url(#mgg)" stroke="#7070b0" stroke-width="1"/></svg><svg style="left:1488px;top:175px" width="24" height="26"><path d="M7.8,17.6 L12.5,12.2 L17.2,17.6" fill="none" stroke="#606060" stroke-width="3" stroke-linecap="butt"/></svg><svg style="left:1488px;top:1067px" width="24" height="26"><path d="M7.8,10.2 L12.5,15.6 L17.2,10.2" fill="none" stroke="#606060" stroke-width="3" stroke-linecap="butt"/></svg><svg style="left:271px;top:1068px" width="28" height="25"><path d="M18.2,8.8 L12.6,13.5 L18.2,18.2" fill="none" stroke="#bebebe" stroke-width="3.2"/></svg><svg style="left:1461px;top:1068px" width="27" height="25"><path d="M8.8,8.8 L14.6,13.5 L8.8,18.2" fill="none" stroke="#bebebe" stroke-width="3.2"/></svg><svg style="left:1522px;top:612px" width="20" height="28" viewBox="1522 612 20 28"><defs><linearGradient id="stg" x1="0" y1="0" x2="1" y2="1"><stop offset="0" stop-color="#2a78c8"/><stop offset="1" stop-color="#9ad0f8"/></linearGradient></defs><path d="M1525.5,626 L1537.5,615 V637 Z" fill="url(#stg)" stroke="#2a6ab0" stroke-width="1.2" stroke-linejoin="round"/><path d="M1535.8,618.5 V633.5" stroke="#d8f0ff" stroke-width="1"/></svg><svg style="left:1530px;top:1120px" width="22" height="20" viewBox="1530 1120 22 20"><path d="M1536.6,1139 L1551.5,1124.8 M1541.6,1139 L1551.5,1129.8 M1546.6,1139 L1551.5,1134.8" stroke="#a4a4a4" stroke-width="2.4" stroke-dasharray="1.3 0.5"/></svg></div></body></html>
